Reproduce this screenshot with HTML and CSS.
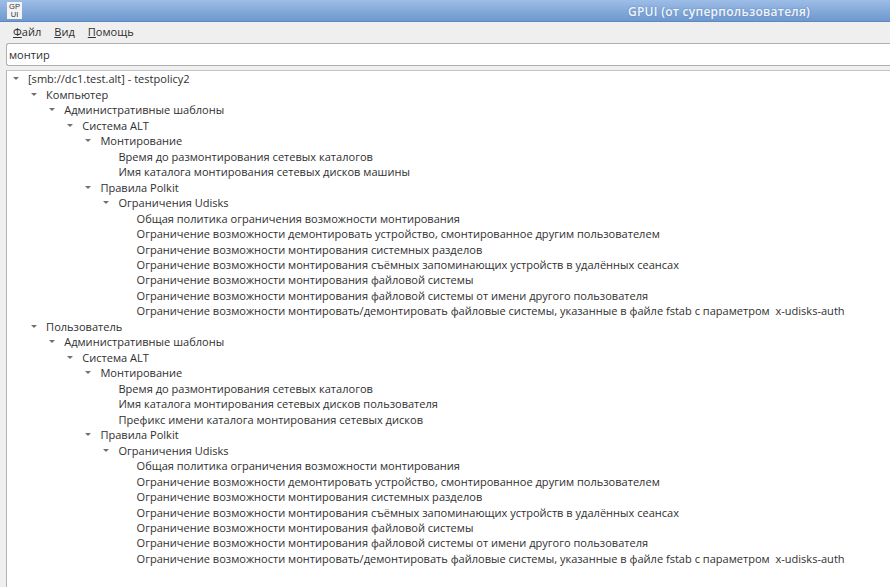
FILE: index.html
```html
<!DOCTYPE html>
<html lang="ru">
<head>
<meta charset="utf-8">
<title>GPUI</title>
<link rel="stylesheet" href="styles.css">
</head>
<body>
<div class="window">
  <header class="titlebar">
    <div class="app-icon"><span>GP</span><span>UI</span></div>
    <div class="title">GPUI (от суперпользователя)</div>
  </header>
  <nav class="menubar">
    <span class="menu-item"><u>Ф</u>айл</span>
    <span class="menu-item"><u>В</u>ид</span>
    <span class="menu-item"><u>П</u>омощь</span>
  </nav>
  <div class="search-wrap"><input class="search" type="text" value="монтир"></div>
  <main class="tree-frame">
    <ul class="tree root">
      <li><div class="row open">[smb://dc1.test.alt] - testpolicy2</div>
        <ul class="tree">
          <li><div class="row open">Компьютер</div>
            <ul class="tree">
              <li><div class="row open">Административные шаблоны</div>
                <ul class="tree">
                  <li><div class="row open">Система ALT</div>
                    <ul class="tree">
                      <li><div class="row open">Монтирование</div>
                        <ul class="tree">
                          <li><div class="row">Время до размонтирования сетевых каталогов</div></li>
                          <li><div class="row">Имя каталога монтирования сетевых дисков машины</div></li>
                        </ul>
                      </li>
                      <li><div class="row open">Правила Polkit</div>
                        <ul class="tree">
                          <li><div class="row open">Ограничения Udisks</div>
                            <ul class="tree">
                              <li><div class="row">Общая политика ограничения возможности монтирования</div></li>
                              <li><div class="row">Ограничение возможности демонтировать устройство, смонтированное другим пользователем</div></li>
                              <li><div class="row">Ограничение возможности монтирования системных разделов</div></li>
                              <li><div class="row">Ограничение возможности монтирования съёмных запоминающих устройств в удалённых сеансах</div></li>
                              <li><div class="row">Ограничение возможности монтирования файловой системы</div></li>
                              <li><div class="row">Ограничение возможности монтирования файловой системы от имени другого пользователя</div></li>
                              <li><div class="row">Ограничение возможности монтировать/демонтировать файловые системы, указанные в файле fstab с параметром&nbsp; x-udisks-auth</div></li>
                            </ul>
                          </li>
                        </ul>
                      </li>
                    </ul>
                  </li>
                </ul>
              </li>
            </ul>
          </li>
          <li><div class="row open">Пользователь</div>
            <ul class="tree">
              <li><div class="row open">Административные шаблоны</div>
                <ul class="tree">
                  <li><div class="row open">Система ALT</div>
                    <ul class="tree">
                      <li><div class="row open">Монтирование</div>
                        <ul class="tree">
                          <li><div class="row">Время до размонтирования сетевых каталогов</div></li>
                          <li><div class="row">Имя каталога монтирования сетевых дисков пользователя</div></li>
                          <li><div class="row">Префикс имени каталога монтирования сетевых дисков</div></li>
                        </ul>
                      </li>
                      <li><div class="row open">Правила Polkit</div>
                        <ul class="tree">
                          <li><div class="row open">Ограничения Udisks</div>
                            <ul class="tree">
                              <li><div class="row">Общая политика ограничения возможности монтирования</div></li>
                              <li><div class="row">Ограничение возможности демонтировать устройство, смонтированное другим пользователем</div></li>
                              <li><div class="row">Ограничение возможности монтирования системных разделов</div></li>
                              <li><div class="row">Ограничение возможности монтирования съёмных запоминающих устройств в удалённых сеансах</div></li>
                              <li><div class="row">Ограничение возможности монтирования файловой системы</div></li>
                              <li><div class="row">Ограничение возможности монтирования файловой системы от имени другого пользователя</div></li>
                              <li><div class="row">Ограничение возможности монтировать/демонтировать файловые системы, указанные в файле fstab с параметром&nbsp; x-udisks-auth</div></li>
                            </ul>
                          </li>
                        </ul>
                      </li>
                    </ul>
                  </li>
                </ul>
              </li>
            </ul>
          </li>
        </ul>
      </li>
    </ul>
  </main>
</div>
</body>
</html>
```

FILE: styles.css
```css
* { box-sizing: border-box; }
html, body { margin: 0; height: 100%; }
body {
  overflow: hidden;
  font-family: "Open Sans", "Noto Sans", sans-serif;
  font-size: 11.05px;
  color: #303030;
  background: #efefef;
}
.window {
  display: flex;
  flex-direction: column;
  height: 587px;
}
.titlebar {
  flex: none;
  height: 22px;
  display: flex;
  align-items: center;
  position: relative;
  background: linear-gradient(#9dbde6, #6e98cf);
  border-bottom: 1px solid #5f88bd;
}
.app-icon {
  width: 15px;
  height: 17px;
  margin-left: 7px;
  background: #f3f3f3;
  display: flex;
  flex-direction: column;
  align-items: center;
  font: 7.5px/7.5px "Liberation Sans", sans-serif;
  color: #333;
  padding-top: 1px;
}
.title {
  position: absolute;
  left: 628px;
  top: 3px;
  font-weight: 600;
  font-size: 12px;
  color: #f0f4fa;
  letter-spacing: 0.27px;
  text-shadow: 0 0 2px #5d86bb;
}
.menubar {
  flex: none;
  height: 20px;
  display: flex;
  align-items: center;
  padding: 0 0 1px 13px;
  gap: 13px;
}
.search-wrap {
  flex: none;
  padding: 1px 0 0 6px;
}
.search {
  display: block;
  width: 884px;
  height: 23px;
  border: 1px solid #b0b0b0;
  border-right: 0;
  border-radius: 3px 0 0 3px;
  padding: 0 2px;
  background: #fff;
  font: inherit;
  color: inherit;
  outline: none;
}
.tree-frame {
  flex: 1;
  margin: 4px 0 0 6px;
  padding: 0.4px 0 0;
  background: #fff;
  border-top: 1px solid #c4c4c4;
  border-left: 1px solid #b4b4b4;
  overflow: hidden;
}
.tree {
  list-style: none;
  margin: 0;
  padding: 0 0 0 18.1px;
}
.tree.root { padding-left: 0; }
.row {
  height: 15.47px;
  line-height: 15.47px;
  padding-left: 21px;
  white-space: nowrap;
  position: relative;
}
.row.open::before {
  content: "";
  position: absolute;
  left: 6px;
  top: 6px;
  border-left: 3.5px solid transparent;
  border-right: 3.5px solid transparent;
  border-top: 3.5px solid #707070;
}
```
